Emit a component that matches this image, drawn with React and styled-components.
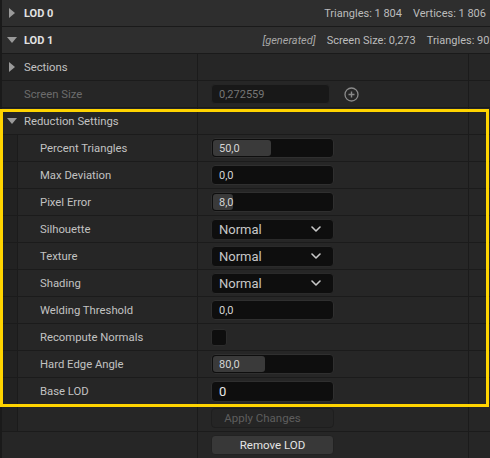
import React from 'react';
import styled, { createGlobalStyle, css } from 'styled-components';

const Global = createGlobalStyle`
  html, body { margin: 0; padding: 0; background: #1a1a1a; }
  body { font-family: Roboto, "Noto Sans", "Liberation Sans", sans-serif; width: 490px; height: 458px; overflow: hidden; }
  * { box-sizing: border-box; }
`;

const Panel = styled.div`
  width: 490px;
  height: 458px;
  background: #1a1a1a;
  padding-left: 2px;
  overflow: hidden;
`;

const HeaderRow = styled.div`
  display: flex;
  align-items: center;
  height: 27px;
  border-bottom: 1px solid #1a1a1a;
  background: #2e2e2e;
  overflow: hidden;
  white-space: nowrap;
`;

const Expander = styled.span`
  width: 19px;
  flex: none;
  display: flex;
  align-items: center;
  justify-content: center;
`;

const Title = styled.span`
  margin-left: 3px;
  font-size: 11px;
  font-weight: 700;
  color: #e2e2e2;
`;

const Info = styled.div`
  display: flex;
  flex: none;
  gap: 11px;
  margin-left: ${p => (p.$lead ? `${p.$lead}px` : 'auto')};
  padding-right: 4px;
  font-size: 11px;
  color: #bcbcbc;
`;

const Gen = styled.span`
  font-style: italic;
  color: #a8a8a8;
`;

const Row = styled.div`
  display: flex;
  height: 27px;
  border-bottom: 1px solid #1b1b1b;
  background: #262626;
`;

const NameCell = styled.div`
  width: 196px;
  flex: none;
  display: flex;
  align-items: center;
  border-right: 1px solid #1b1b1b;
  white-space: nowrap;
`;

const Gutter = styled.div`
  width: 16px;
  align-self: stretch;
  flex: none;
  background: #222222;
  border-right: 1px solid #1b1b1b;
`;

const Label = styled.span`
  font-size: 11.3px;
  color: ${p => (p.$dim ? '#6c6c6c' : '#c2c2c2')};
  padding-left: ${p => (p.$plain ? '22px' : '3px')};
`;

const ValueCell = styled.div`
  width: 271px;
  flex: none;
  display: flex;
  align-items: center;
  padding-left: 13px;
  border-right: 1px solid #1b1b1b;
`;

const Extra = styled.div`
  flex: 1;
`;

const SpinBox = styled.div`
  display: grid;
  width: 123px;
  height: 20px;
  padding: 1px;
  background: #0e0e0e;
  border: 1px solid #2f2f2f;
  border-radius: 4px;
`;

const Fill = styled.div`
  grid-area: 1 / 1;
  background: #3a3a3a;
  border-radius: 3px;
`;

const SpinValue = styled.span`
  grid-area: 1 / 1;
  align-self: center;
  padding-left: 6px;
  font-size: ${p => (p.$big ? '13px' : '11px')};
  color: ${p => (p.$big ? '#e8e8e8' : '#d4d4d4')};
`;

const TextBox = styled.div`
  display: flex;
  align-items: center;
  width: ${p => (p.$narrow ? '119px' : '123px')};
  height: ${p => (p.$tall ? '21px' : '20px')};
  padding-left: 7px;
  background: ${p => (p.$disabled ? '#181818' : '#0e0e0e')};
  border: 1px solid ${p => (p.$disabled ? '#252525' : '#2f2f2f')};
  border-radius: 4px;
  font-size: ${p => (p.$tall ? '13px' : '11px')};
  color: ${p => (p.$disabled ? '#767676' : p.$tall ? '#e8e8e8' : '#d4d4d4')};
`;

const Combo = styled.div`
  display: flex;
  align-items: center;
  justify-content: space-between;
  width: 123px;
  height: 21px;
  padding: 0 12px 0 7px;
  background: #0e0e0e;
  border: 1px solid #2a2a2a;
  border-radius: 4px;
  font-size: 13px;
  color: #c8c8c8;
`;

const Check = styled.div`
  width: 16px;
  height: 17px;
  background: #0e0e0e;
  border: 1px solid #2c2c2c;
  border-radius: 3px;
`;

const Button = styled.div`
  display: flex;
  align-items: center;
  justify-content: center;
  width: 123px;
  height: 20px;
  border-radius: 4px;
  font-size: 11.5px;
  ${p =>
    p.$disabled
      ? css`
          background: #252525;
          border: 1px solid #1e1e1e;
          color: #5e5e5e;
          padding-right: 20px;
        `
      : css`
          background: #383838;
          border: 1px solid #222222;
          color: #e4e4e4;
        `}
`;

const PlusIcon = styled.svg`
  margin-left: 14px;
  flex: none;
`;

const Group = styled.div`
  position: relative;
  &::after {
    content: '';
    position: absolute;
    top: 1px;
    left: -2px;
    right: 1px;
    bottom: -2px;
    border: 3px solid #ffd400;
    pointer-events: none;
  }
`;

const CaretRight = () => (
  <svg width="6" height="10" viewBox="0 0 6 10">
    <path d="M0 0 L6 5 L0 10 Z" fill="#9a9a9a" />
  </svg>
);

const CaretDown = () => (
  <svg width="10" height="6" viewBox="0 0 10 6">
    <path d="M0 0 L10 0 L5 6 Z" fill="#9a9a9a" />
  </svg>
);

const Chevron = () => (
  <svg width="10" height="6" viewBox="0 0 10 6">
    <path d="M1 1 L5 5 L9 1" fill="none" stroke="#c8c8c8" strokeWidth="1.6" strokeLinecap="round" strokeLinejoin="round" />
  </svg>
);

const Prop = ({ name, indent = true, children }) => (
  <Row>
    <NameCell>
      {indent && <Gutter />}
      <Label $plain>{name}</Label>
    </NameCell>
    <ValueCell>{children}</ValueCell>
    <Extra />
  </Row>
);

const Spin = ({ value, fill, big }) => (
  <SpinBox>
    <Fill style={{ width: `${fill}px` }} />
    <SpinValue $big={big}>{value}</SpinValue>
  </SpinBox>
);

export default function App() {
  return (
    <Panel>
      <Global />
      <HeaderRow>
        <Expander><CaretRight /></Expander>
        <Title>LOD 0</Title>
        <Info>
          <span>Triangles: 1 804</span>
          <span>Vertices: 1 806</span>
        </Info>
      </HeaderRow>
      <HeaderRow>
        <Expander><CaretDown /></Expander>
        <Title>LOD 1</Title>
        <Info $lead={209}>
          <Gen>[generated]</Gen>
          <span>Screen Size: 0,273</span>
          <span>Triangles: 902</span>
          <span>Vertices: 904</span>
        </Info>
      </HeaderRow>
      <Row>
        <NameCell>
          <Expander><CaretRight /></Expander>
          <Label>Sections</Label>
        </NameCell>
        <ValueCell />
        <Extra />
      </Row>
      <Row>
        <NameCell>
          <Label $plain $dim>Screen Size</Label>
        </NameCell>
        <ValueCell>
          <TextBox $disabled $narrow>0,272559</TextBox>
          <PlusIcon width="15" height="15" viewBox="0 0 15 15">
            <circle cx="7.5" cy="7.5" r="6.5" fill="none" stroke="#8a8a8a" strokeWidth="1.3" />
            <path d="M7.5 4.5 V10.5 M4.5 7.5 H10.5" stroke="#8a8a8a" strokeWidth="1.4" />
          </PlusIcon>
        </ValueCell>
        <Extra />
      </Row>
      <Group>
        <Row>
          <NameCell>
            <Expander><CaretDown /></Expander>
            <Label>Reduction Settings</Label>
          </NameCell>
          <ValueCell />
          <Extra />
        </Row>
        <Prop name="Percent Triangles"><Spin value="50,0" fill={58} /></Prop>
        <Prop name="Max Deviation"><TextBox>0,0</TextBox></Prop>
        <Prop name="Pixel Error"><Spin value="8,0" fill={20} /></Prop>
        <Prop name="Silhouette"><Combo>Normal<Chevron /></Combo></Prop>
        <Prop name="Texture"><Combo>Normal<Chevron /></Combo></Prop>
        <Prop name="Shading"><Combo>Normal<Chevron /></Combo></Prop>
        <Prop name="Welding Threshold"><TextBox>0,0</TextBox></Prop>
        <Prop name="Recompute Normals"><Check /></Prop>
        <Prop name="Hard Edge Angle"><Spin value="80,0" fill={52} /></Prop>
        <Prop name="Base LOD"><TextBox $tall>0</TextBox></Prop>
      </Group>
      <Row>
        <NameCell><Gutter /></NameCell>
        <ValueCell><Button $disabled>Apply Changes</Button></ValueCell>
        <Extra />
      </Row>
      <Row>
        <NameCell />
        <ValueCell><Button>Remove LOD</Button></ValueCell>
        <Extra />
      </Row>
    </Panel>
  );
}
